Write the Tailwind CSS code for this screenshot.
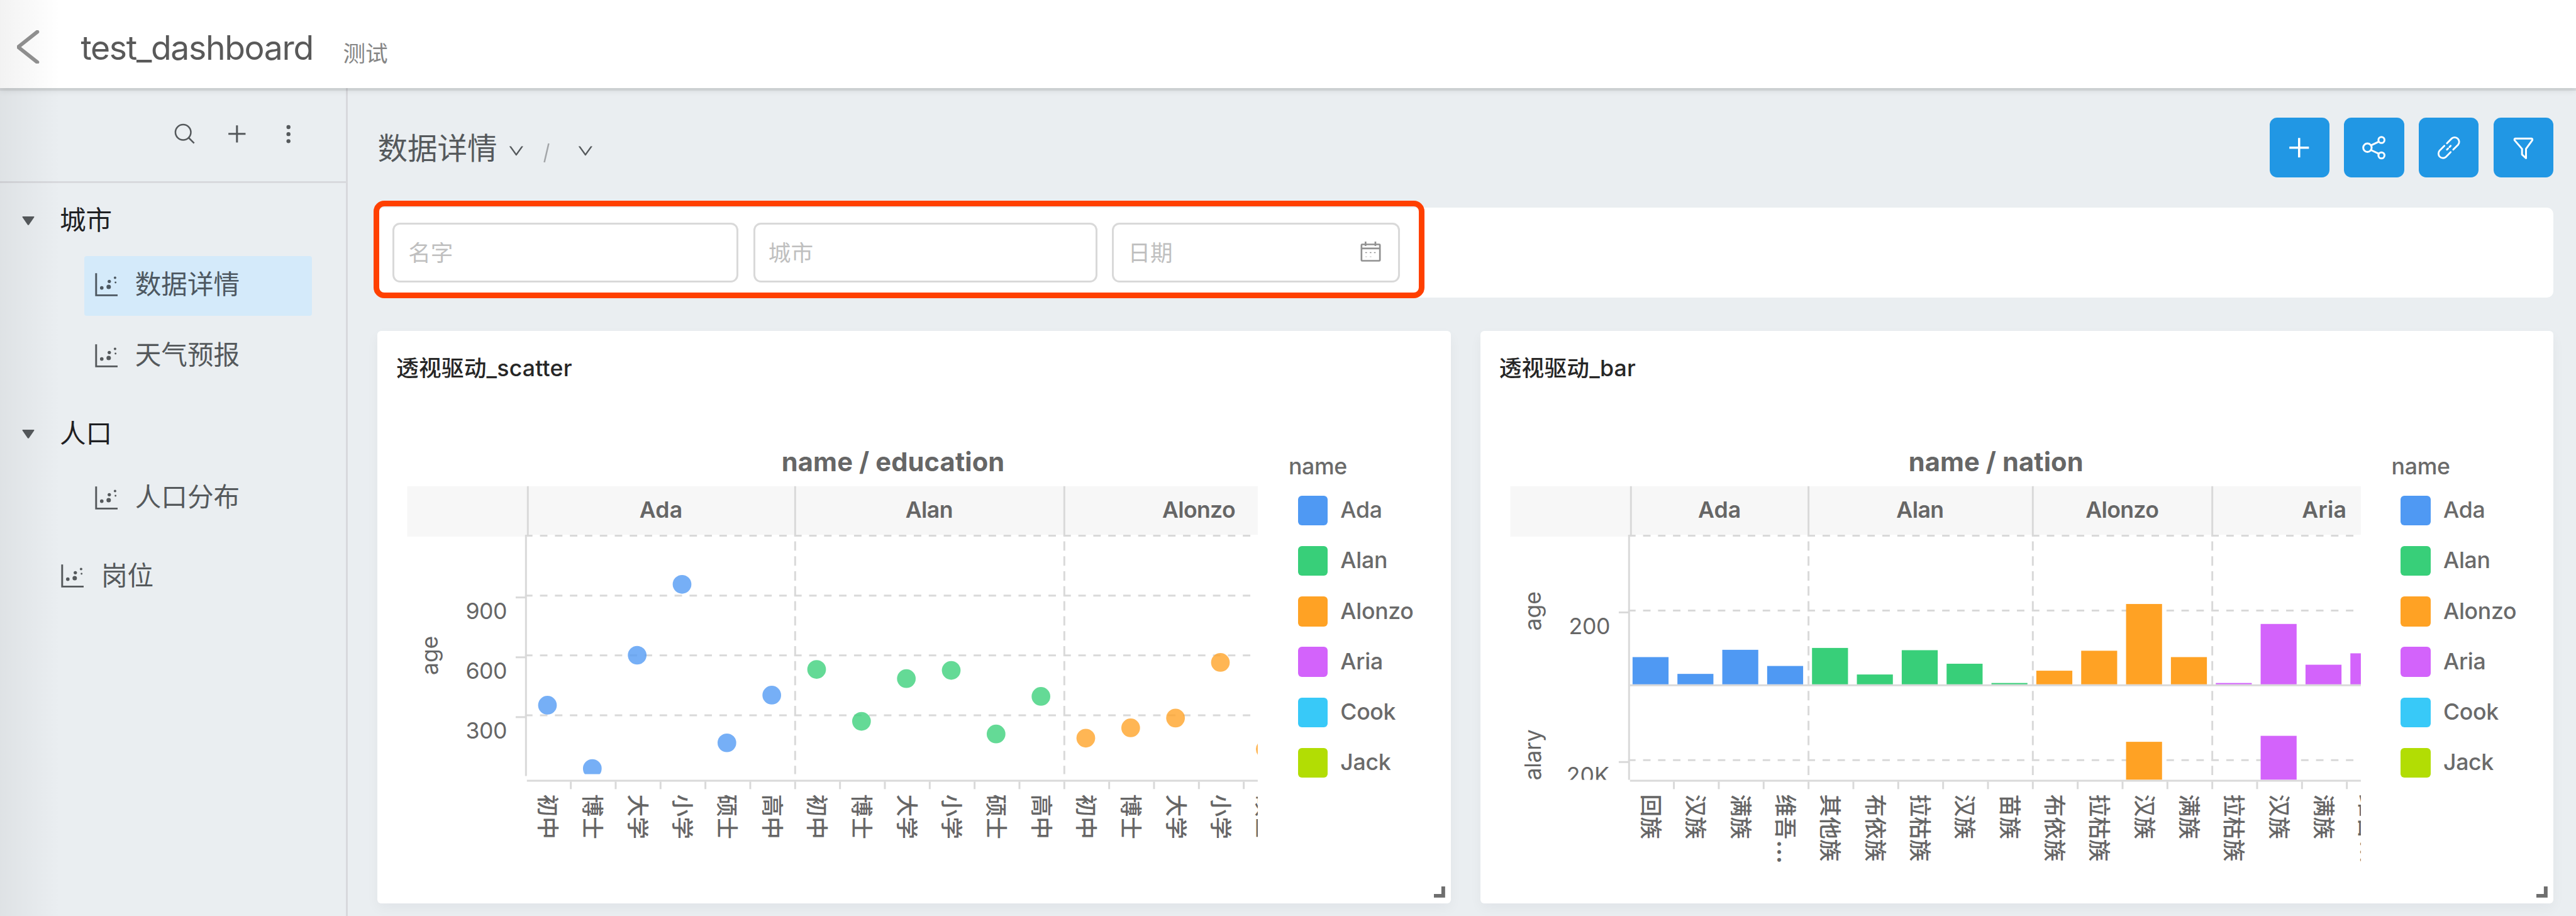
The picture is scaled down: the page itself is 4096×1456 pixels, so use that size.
<!DOCTYPE html>
<html lang="zh-CN" class="text-[47.5573px]">
<head>
<meta charset="utf-8">
<title>test_dashboard</title>
<script src="https://cdn.jsdelivr.net/npm/@tailwindcss/browser@4"></script>
</head>
<body class="relative flex h-[1456px] w-[4096px] flex-col overflow-hidden bg-[#eaeef1] font-[Inter,'Noto_Sans_CJK_SC',sans-serif] text-[#55595c]">

<!-- shared icons -->
<svg class="hidden">
  <symbol id="i-scatter" viewBox="0 0 49 50">
    <path d="M2.5 0V48H49" fill="none" stroke="currentColor" stroke-width="4"/>
    <g fill="currentColor"><circle cx="14.7" cy="32" r="3.8"/><circle cx="29.7" cy="29.7" r="4.8"/><circle cx="31" cy="18" r="3.6"/><circle cx="43.5" cy="10" r="2.7"/><circle cx="44.5" cy="20.3" r="2"/></g>
  </symbol>
  <symbol id="i-plus" viewBox="0 0 1024 1024"><path fill="currentColor" d="M482 176h60q8 0 8 8v656q0 8-8 8h-60q-8 0-8-8V184q0-8 8-8zM184 474h656q8 0 8 8v60q0 8-8 8H184q-8 0-8-8v-60q0-8 8-8z"/></symbol>
  <symbol id="i-down" viewBox="0 0 1024 1024"><path fill="currentColor" d="M884 256h-75c-5.100 0-9.900 2.500-12.900 6.600L512 654.200 227.900 262.600c-3-4.100-7.800-6.600-12.900-6.600h-75c-6.500 0-10.300 7.400-6.500 12.700l352.600 486.100c12.800 17.600 39 17.600 51.700 0l352.600-486.100c3.900-5.300.1-12.700-6.400-12.700z"/></symbol>
  <symbol id="i-caret" viewBox="0 0 26 19"><path fill="currentColor" d="M1 0H25Q26.500 .5 25.500 2L14.500 18Q13 19.500 11.500 18L.5 2Q-.5 .5 1 0Z"/></symbol>
</svg>

<header class="relative z-10 flex h-11.75 shrink-0 items-start bg-white pl-2.25 shadow-[0_4px_1px_rgba(0,0,0,.07),0_4px_10px_rgba(0,0,0,.09)]">
  <svg class="mt-4 h-4.5 w-3.25 text-[#929292]" viewBox="0 0 52 72"><path d="M46 3.500 5 36 46 68.500" fill="none" stroke="currentColor" stroke-width="8" stroke-linecap="round" stroke-linejoin="round" transform="translate(-2.500 0)"/></svg>
  <h1 class="mt-[49px] ml-[63px] w-[367px] text-lg/none whitespace-nowrap tracking-[-1.35px] text-[#595959]">test_dashboard</h1>
  <span class="mt-[68px] ml-[50px] text-xs/none text-[#868686]">测试</span>
</header>

<div class="flex min-h-0 flex-1">
  <aside class="flex w-46.5 shrink-0 flex-col border-r-[3px] border-[#d8d9dd]">
    <div class="flex h-12.75 shrink-0 items-center justify-end gap-3.5 border-b-[3px] border-[#d8d9dd] pr-[69px] pb-[2px]">
      <svg class="size-3.5" viewBox="0 0 56 56"><g fill="none" stroke="currentColor" stroke-width="3.400"><circle cx="24.500" cy="24.500" r="16.500"/><path d="M36 36 48 48"/></g></svg>
      <svg class="size-3.5"><use href="#i-plus"/></svg>
      <svg class="size-3.5" viewBox="0 0 56 56"><g fill="currentColor"><circle cx="26.500" cy="13.500" r="4.300"/><circle cx="26.500" cy="28.500" r="4.300"/><circle cx="26.500" cy="43.500" r="4.300"/></g></svg>
    </div>
    <nav class="flex flex-col pt-1.5 text-sm/none">
      <div class="flex h-7 items-center text-[#1f2023]">
        <svg class="ml-[35px] h-[14px] w-[20px] text-[#55595c]"><use href="#i-caret"/></svg><span class="ml-[40px]">城市</span>
      </div>
      <a class="mt-1.25 ml-11.25 flex h-8 w-30.5 items-center gap-[28px] rounded-[4px] bg-[#d4eafa] pb-[4px] pl-[17px] text-[#4d5861]"><svg class="h-[37px] w-[36px]"><use href="#i-scatter"/></svg>数据详情</a>
      <a class="mt-1.5 ml-11.25 flex h-8 w-30.5 items-center gap-[28px] pb-[5px] pl-[17px]"><svg class="h-[37px] w-[36px]"><use href="#i-scatter"/></svg>天气预报</a>
      <div class="mt-2.75 flex h-7 items-center text-[#1f2023]">
        <svg class="ml-[35px] h-[14px] w-[20px] text-[#55595c]"><use href="#i-caret"/></svg><span class="ml-[40px]">人口</span>
      </div>
      <a class="mt-1.25 ml-11.25 flex h-8 w-30.5 items-center gap-[28px] pb-[5px] pl-[17px]"><svg class="h-[37px] w-[36px]"><use href="#i-scatter"/></svg>人口分布</a>
      <a class="mt-2.75 flex h-7 items-center gap-[28px] pl-[97px]"><svg class="h-[37px] w-[36px]"><use href="#i-scatter"/></svg>岗位</a>
    </nav>
  </aside>

  <main class="flex flex-1 flex-col pt-4 pr-3 pl-4">
    <div class="flex h-8 items-center justify-between">
      <div class="flex items-center text-base/none">
        <span class="mt-[1px]">数据详情</span>
        <svg class="mt-[11px] ml-[15px] size-2.5"><use href="#i-down"/></svg>
        <svg class="mt-[17px] ml-[29px] h-[32px] w-[10px] text-[#a3a6a9]" viewBox="0 0 10 32"><path d="M1.500 31 8.500 1" stroke="currentColor" stroke-width="2.500"/></svg>
        <svg class="mt-[11px] ml-[42px] size-2.5"><use href="#i-down"/></svg>
      </div>
      <div class="flex gap-2 text-white">
        <button class="flex size-8 items-center justify-center rounded bg-[#2197e4]"><svg class="size-4"><use href="#i-plus"/></svg></button>
        <button class="flex size-8 items-center justify-center rounded bg-[#2197e4]"><svg class="size-4" viewBox="-32 -32 64 64" fill="none" stroke="currentColor" stroke-width="4"><circle cx="-14" cy="0" r="9"/><circle cx="16" cy="-16.500" r="6.500"/><circle cx="16" cy="16.500" r="6.500"/><path d="M-6.500-5 10.500-13M-6.500 5 10.500 13"/></svg></button>
        <button class="flex size-8 items-center justify-center rounded bg-[#2197e4]"><svg class="size-4" viewBox="-32 -32 64 64" fill="none" stroke="currentColor" stroke-width="3.800" stroke-linecap="round"><path d="M-4-9.500 6.500-20A9.600 9.600 0 0 1 20 -6.500L9.500 4"/><path d="M4 9.500-6.500 20A9.600 9.600 0 0 1-20 6.500L-9.500-4"/><path d="M4-4 1.500-1.500M-1.500 1.500-4 4"/></svg></button>
        <button class="flex size-8 items-center justify-center rounded bg-[#2197e4]"><svg class="size-4" viewBox="-32 -32 64 64" fill="none" stroke="currentColor" stroke-width="4" stroke-linejoin="round"><path d="M-17-20H17Q20-20 19-16.500L5.500 2V22L-3 14V2L-19-16.500Q-20-20-17-20Z" transform="translate(-.5 .5)"/></svg></button>
      </div>
    </div>

    <section class="relative mt-4 flex h-12 shrink-0 items-center gap-2 rounded-[10px] bg-white pl-2 text-xs/none text-[#bfbfbf]">
      <div class="flex h-8 w-46.25 items-center rounded border-[3px] border-[#d9d9d9] pt-[3px] pl-[22px]">名字</div>
      <div class="flex h-8 w-46 items-center rounded border-[3px] border-[#d9d9d9] pt-[3px] pl-[21px]">城市</div>
      <div class="flex h-8 w-38.5 items-center justify-between rounded border-[3px] border-[#d9d9d9] pt-[3px] pr-[27px] pl-[22px]">日期
        <svg class="mb-[6px] h-[32px] w-[33px] text-[#919191]" viewBox="0 0 44 43" fill="none" stroke="currentColor" stroke-width="3.600"><rect x="2.300" y="6" width="39.400" height="35" rx="1.500"/><path d="M2 14.500H42M11 0V9.500M32 0V9.500"/><path d="M10.500 23.500h3.500M20 23.500h3.500M29 23.500h3.500" stroke-width="2"/><path d="M10.500 32.500h3.500M20 32.500h3.500" stroke-width="2.500" stroke-opacity=".35"/></svg>
      </div>
      <div class="absolute top-[-11px] left-[-6px] h-[155px] w-[1671px] rounded-[17px] border-[9px] border-[#ff4000]"></div>
    </section>

    <div class="mt-4.5 flex gap-4">
      <article class="relative h-76.5 w-143.5 rounded-[6px] bg-white shadow-[0_8px_20px_rgba(20,30,50,.045)]">
        <h2 class="flex h-10 items-center pl-2.5 text-xs/none font-medium tracking-[0.2px] text-[#262626]">透视驱动_scatter</h2>
        <div class="flex">
          <svg id="scatter" class="h-65 w-122 shrink-0" viewBox="808 868 1952 1040"></svg>
          <div class="legend -ml-[2px] flex flex-col pt-6.5 text-xs/none font-medium tracking-[-0.3px] text-[#6a6a6a]"></div>
        </div>
        <svg class="absolute right-[9px] bottom-[9px] size-1.5 text-[#6e6e6e]" viewBox="0 0 24 24"><path d="M0 20H20V0" fill="none" stroke="currentColor" stroke-width="8"/></svg>
      </article>
      <article class="relative h-76.5 w-143.5 rounded-[6px] bg-white shadow-[0_8px_20px_rgba(20,30,50,.045)]">
        <h2 class="flex h-10 items-center pl-2.5 text-xs/none font-medium tracking-[0.2px] text-[#262626]">透视驱动_bar</h2>
        <div class="flex">
          <svg id="bar" class="h-65 w-122 shrink-0" viewBox="3168 868 1952 1040"></svg>
          <div class="legend -ml-[2px] flex flex-col pt-6.5 text-xs/none font-medium tracking-[-0.3px] text-[#6a6a6a]"></div>
        </div>
        <svg class="absolute right-[9px] bottom-[9px] size-1.5 text-[#6e6e6e]" viewBox="0 0 24 24"><path d="M0 20H20V0" fill="none" stroke="currentColor" stroke-width="8"/></svg>
      </article>
    </div>
  </main>
</div>

<div class="pointer-events-none absolute inset-y-0 left-0 z-20 w-[96px] bg-linear-to-r from-black/5 to-transparent"></div>

<script>
const BLUE = '#4f99f3', GREEN = '#38cf79', ORANGE = '#ffa224', PURPLE = '#d363fb', CYAN = '#38c9f8', LIME = '#b2dd04';
const LINE = '#d9d9d9', INK = '#666';

document.querySelectorAll('.legend').forEach(el => {
  el.innerHTML = '<div class="flex h-3.25 items-center">name</div><ul class="mt-2.25 flex flex-col gap-2.75 pl-1.25">' +
    [['Ada', BLUE], ['Alan', GREEN], ['Alonzo', ORANGE], ['Aria', PURPLE], ['Cook', CYAN], ['Jack', LIME]].map(([n, c]) =>
      `<li class="flex h-4 items-center gap-[20px]"><i class="size-4 rounded-[6px]" style="background:${c}"></i><span class="pb-[1px]">${n}</span></li>`).join('') + '</ul>';
});

const rect = (x, y, w, h, f) => `<rect x="${x}" y="${y}" width="${w}" height="${h}" fill="${f}"/>`;
const line = (x1, y1, x2, y2, dash = '') => `<path d="M${x1} ${y1}L${x2} ${y2}" stroke="${LINE}" stroke-width="4" fill="none"${dash && ` stroke-dasharray="${dash}"`}/>`;
const text = (s, x, y, o = '') => `<text x="${x}" y="${y}" fill="${INK}" font-size="48" ${o}>${s}</text>`;
const side = (s, x, y, len) => `<text transform="translate(${x} ${y}) rotate(-90)" fill="${INK}" font-size="48" text-anchor="middle" textLength="${len}">${s}</text>`;

/* pieces common to both facets; x0 is the plot's left edge */
function frame(id, x0, groups, title, titleX, titleW, heads, rows, cats, axisEnd) {
  const x1 = x0 + 1566;
  let s = `<defs><clipPath id="${id}-c"><rect x="${x0 - 260}" y="860" width="${x1 - x0 + 260}" height="1000"/></clipPath>
    <clipPath id="${id}-p"><rect x="${x0 - 260}" y="1140" width="${x1 - x0 + 260}" height="${axisEnd - 1140}"/></clipPath></defs>`;
  s += text(title, titleX, 1008, `style="font-size:56px" font-weight="700" text-anchor="middle" textLength="${titleW}"`);
  s += rect(x0 - 254, 1040, 256, 108, '#f7f7f7') + rect(x0 + 2, 1040, 1564, 104, '#f7f7f7');
  s += `<g clip-path="url(#${id}-c)">`;
  [x0 + 4, ...groups].forEach(x => s += line(x, 1040, x, 1146));
  heads.forEach(([n, x, w]) => s += text(n, x, 1108, `font-weight="600" text-anchor="middle" textLength="${w}"`));
  [1146, ...rows].forEach(y => s += line(x0 - 2, y, x1, y, '16'));
  groups.forEach(x => s += line(x, 1158, x, axisEnd, '20 12'));
  s += line(x0, 1148, x0, axisEnd === 1668 ? 1668 : 1660);
  s += line(x0 + 2, 1670, x1, 1670);
  for (let x = x0 + 96; x < x1; x += 96) s += line(x, 1672, x, 1688);
  cats.forEach((c, i) => {
    const label = c.replace('…', '<tspan font-size="56" dx="2">…</tspan>');
    s += `<text transform="translate(${x0 + 29 + 96 * i} 1699) rotate(90)" fill="${INK}" font-size="48" font-weight="500">${label}</text>`;
  });
  return s + '</g>';
}

/* scatter */
{
  const edu = ['初中', '博士', '大学', '小学', '硕士', '高中'];
  const ys = [1508.5, 1644, 1401.6, 1250, 1589, 1487, 1432, 1543, 1451.6, 1434, 1570, 1489.7, 1579, 1557, 1536, 1417, 1602.6];
  let s = frame('s', 1126, [1702, 2278], 'name / education', 1911.5, 477,
    [['Ada', 1415, 92], ['Alan', 1989, 102], ['Alonzo', 2566, 157]],
    [1274, 1402, 1530], ys.map((_, i) => edu[i % 6]), 1656);
  [[900, 1278], [600, 1406], [300, 1534]].forEach(([v, y]) => s += line(1104, y, 1126, y) + text(v, 1086, y + 46, 'text-anchor="end" textLength="89"'));
  s += side('age', 937, 1402, 84);
  s += '<g clip-path="url(#s-p)">' + ys.map((y, i) => `<circle cx="${1172 + 96 * i}" cy="${y}" r="20" fill="${[BLUE, GREEN, ORANGE][Math.floor(i / 6)]}" fill-opacity=".78"/>`).join('') + '</g>';
  document.getElementById('scatter').innerHTML = s;
}

/* bars */
{
  const cats = ['回族', '汉族', '满族', '维吾…', '其他族', '布依族', '拉枯族', '汉族', '苗族', '布依族', '拉枯族', '汉族', '满族', '拉枯族', '汉族', '满族', '维吾…'];
  const tops = [1405.6, 1441.5, 1390, 1424.6, 1386, 1442.8, 1390.8, 1419.8, 1461, 1434.7, 1392, 1292, 1405.6, 1461, 1334.7, 1421.9, 1397.5];
  const color = i => i < 4 ? BLUE : i < 9 ? GREEN : i < 13 ? ORANGE : PURPLE;
  let s = frame('b', 3486, [3870, 4350, 4734], 'name / nation', 4271, 374,
    [['Ada', 3679.5, 92], ['Alan', 4109, 102], ['Alonzo', 4541.5, 157], ['Aria', 4973.5, 95]],
    [1306, 1626], cats, 1668);
  s += line(3464, 1310, 3486, 1310) + text(200, 3446, 1356, 'text-anchor="end" textLength="89"') + side('age', 3297, 1307, 84);
  s += '<g clip-path="url(#b-p)">' + line(3464, 1630, 3486, 1630) + text('20K', 3444, 1676, 'text-anchor="end" textLength="92"') + side('salary', 3297, 1627, 134);
  tops.forEach((y, i) => s += rect(3493.5 + 96 * i, y, Math.min(77, 5052 - 3493.5 - 96 * i), 1464 - y, color(i)));
  s += rect(3493.5 + 96 * 11, 1586.8, 77, 81.2, ORANGE) + rect(3493.5 + 96 * 14, 1574, 77, 94, PURPLE) + line(3488, 1466, 5052, 1466) + '</g>';
  document.getElementById('bar').innerHTML = s;
}
</script>
</body>
</html>
